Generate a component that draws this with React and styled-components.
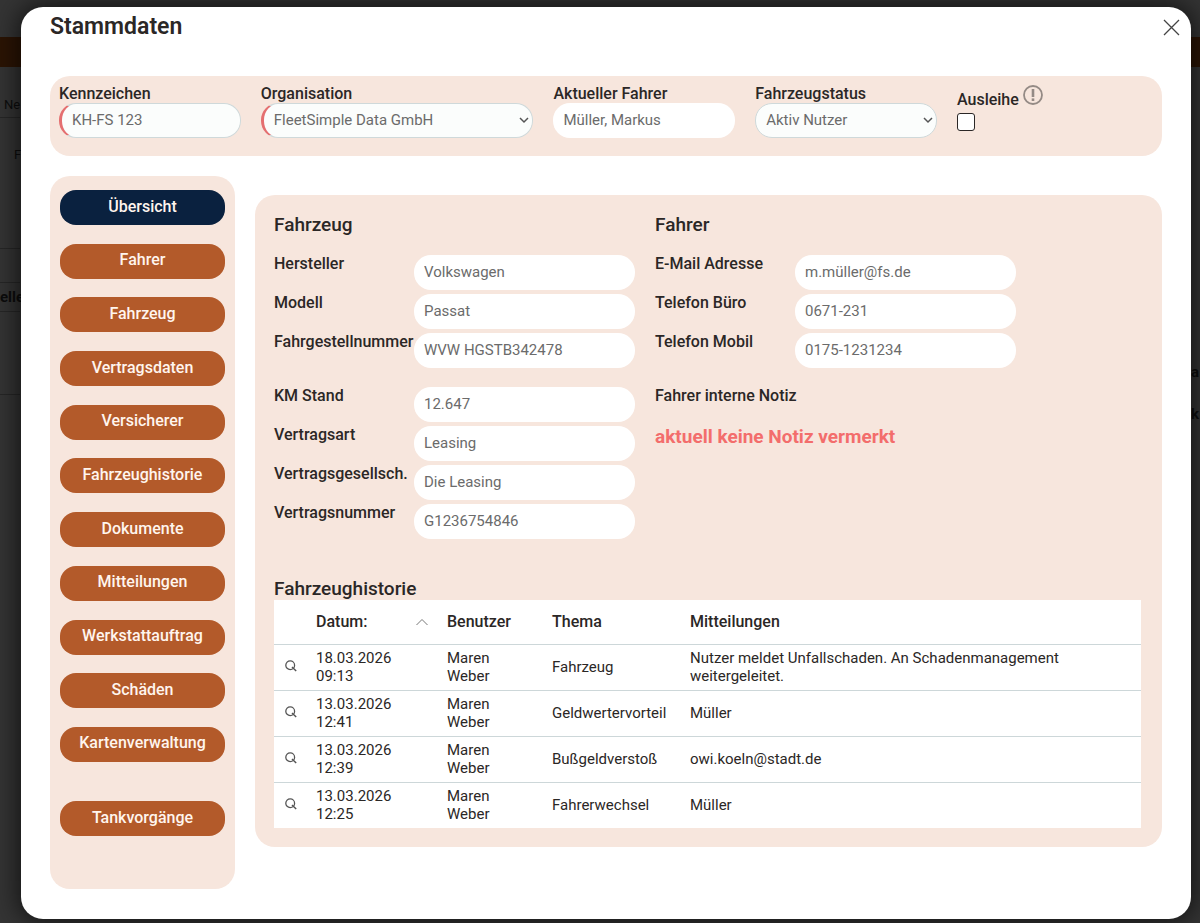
import React from "react";
import styled, { createGlobalStyle } from "styled-components";

const GlobalStyle = createGlobalStyle`
  * {
    box-sizing: border-box;
  }
  body {
    margin: 0;
    background: #2c2c2c;
    color: #2b2726;
    font-family: Roboto, "Liberation Sans", sans-serif;
    font-size: 15px;
    line-height: 18px;
  }
  input, select, button {
    font: inherit;
  }
`;

const Page = styled.div`
  display: grid;
  min-height: 100vh;
  overflow: hidden;
`;

/* dimmed page behind the dialog */
const Backdrop = styled.div`
  grid-area: 1 / 1;
  display: flex;
  flex-direction: column;
  padding-top: 37px;
  background: #343434;
  color: #0c0c0c;
`;
const BackBar = styled.div`
  height: 30px;
  background: #2b1404;
`;
const BackBody = styled.div`
  display: flex;
  justify-content: space-between;
`;
const BackColumn = styled.div`
  width: 20px;
  white-space: nowrap;
  padding-top: ${(p) => p.$top || 0}px;
`;
const BackCell = styled.div`
  height: ${(p) => p.$height}px;
  padding-left: ${(p) => p.$indent || 0}px;
  font-size: ${(p) => (p.$bold ? 15 : 13)}px;
  font-weight: ${(p) => (p.$bold ? 700 : 400)};
  border-bottom: ${(p) => (p.$line ? "1px solid #262626" : "none")};
`;

const Dialog = styled.div`
  grid-area: 1 / 1;
  z-index: 1;
  margin: 7px 9px 4px 21px;
  background: #fff;
  border-radius: 22px;
  box-shadow: 0 0 24px 4px rgba(0, 0, 0, 0.6);
`;
const Header = styled.header`
  display: flex;
  align-items: center;
  justify-content: space-between;
  padding: 7px 9px 0 29px;
`;
const Title = styled.h1`
  margin: 0;
  font-size: 23px;
  line-height: 26px;
  font-weight: 600;
`;
const CloseButton = styled.button`
  display: flex;
  padding: 2px;
  border: none;
  background: none;
  color: #444;
  cursor: pointer;
`;
const Content = styled.div`
  padding: 36px 29px 30px;
`;

const TopPanel = styled.section`
  display: grid;
  grid-template-columns: 2fr 3fr 2fr 2fr 195px;
  gap: 20px;
  padding: 9px 10px 18px 9px;
  background: #f7e6dd;
  border-radius: 20px;
`;
const Label = styled.label`
  display: block;
  font-size: 16px;
  font-weight: 500;
  white-space: nowrap;
`;
const Input = styled.input`
  display: block;
  width: 100%;
  min-width: 0;
  height: 35px;
  padding: 0 10px 2px;
  border: none;
  border-radius: 17px;
  background: ${(p) => (p.$outlined ? "#fbfdfc" : "#fff")};
  color: #6b6b6b;
  ${(p) => p.$outlined && "border: 1px solid #cfd9da;"}
  ${(p) => p.$required && "border-left: 3px solid #e46f70;"}
`;
const SelectWrap = styled.div`
  position: relative;
  svg {
    position: absolute;
    right: 4px;
    top: 12px;
    color: #555;
    pointer-events: none;
  }
`;
const Select = styled(Input)`
  appearance: none;
`;
const LoanLabel = styled(Label)`
  display: flex;
  align-items: flex-end;
  gap: 4px;
  height: 24px;
  svg {
    align-self: flex-start;
    color: #948a85;
  }
`;
const Checkbox = styled.input`
  appearance: none;
  display: block;
  width: 18px;
  height: 18px;
  margin: 4px 0 0;
  border: 1px solid #2b2726;
  border-radius: 3px;
  background: #fff;
  &:checked {
    background: #b35a2a;
  }
`;

const Columns = styled.div`
  display: flex;
  align-items: flex-start;
  gap: 20px;
  padding-top: 20px;
`;
const Sidebar = styled.nav`
  flex: 0 0 185px;
  padding: 14px 10px 53px;
  background: #f7e6dd;
  border-radius: 20px;
`;
const NavList = styled.div`
  display: grid;
  align-content: space-between;
  min-height: 572px;
  margin-bottom: 39px;
`;
const NavButton = styled.button`
  width: 100%;
  height: 35px;
  padding: 0 0 2px;
  border: none;
  border-radius: 16px;
  background: ${(p) => (p.$active ? "#0a213f" : "#b35a2a")};
  color: #fff5ee;
  font-size: 16px;
  font-weight: 500;
  cursor: pointer;
`;

const Main = styled.main`
  flex: 1;
  min-width: 0;
  margin-top: 19px;
  padding: 19px 21px 19px 19px;
  background: #f7e6dd;
  border-radius: 20px;
`;
const SectionTitle = styled.h2`
  margin: 0;
  font-size: 19px;
  line-height: 22px;
  font-weight: 500;
`;
const Details = styled.div`
  display: grid;
  grid-template-columns: 1fr 1fr;
  gap: 20px;
  padding: 0 125px 39px 0;
`;
const FieldGroup = styled.div`
  display: grid;
  gap: 4px;
  margin-top: 19px;
`;
const FieldRow = styled.div`
  display: flex;
  align-items: flex-start;
  ${Label} {
    flex: 0 0 140px;
  }
`;
const NoteTitle = styled.h3`
  margin: 0;
  font-size: 16px;
  line-height: 18px;
  font-weight: 500;
`;
const Note = styled.p`
  margin: 17px 0 0;
  color: #f36d6c;
  font-size: 19px;
  line-height: 22px;
  font-weight: 700;
`;

const Table = styled.table`
  width: 100%;
  table-layout: fixed;
  border-collapse: collapse;
  background: #fff;
`;
const HeadCell = styled.th`
  width: ${(p) => p.$width};
  height: 44px;
  padding: 0;
  font-size: 16px;
  font-weight: 500;
  text-align: left;
`;
const SortHead = styled.div`
  display: flex;
  align-items: center;
  justify-content: space-between;
  padding-right: 19px;
`;
const Cell = styled.td`
  height: 46px;
  padding: 0 ${(p) => p.$right || 0}px 0 0;
  border-top: 1px solid #cdd7d9;
`;
const IconButton = styled.button`
  display: flex;
  padding: 0 11px 2px;
  border: none;
  background: none;
  color: #555;
  cursor: pointer;
`;

const ChevronDown = () => (
  <svg width="10" height="10" viewBox="0 0 10 10" fill="none" stroke="currentColor" strokeWidth="1.5">
    <path d="M1 3l4 4 4-4" />
  </svg>
);
const CloseIcon = () => (
  <svg width="17" height="17" viewBox="0 0 17 17" fill="none" stroke="currentColor" strokeWidth="1.3">
    <path d="M1 1l15 15M16 1L1 16" />
  </svg>
);
const InfoIcon = () => (
  <svg width="20" height="20" viewBox="0 0 20 20" fill="none" stroke="currentColor">
    <circle cx="10" cy="10" r="9" strokeWidth="1.8" />
    <path d="M10 4v8" strokeWidth="2.6" />
    <path d="M10 13.4v2.6" strokeWidth="2.6" />
  </svg>
);
const SortIcon = () => (
  <svg width="12" height="8" viewBox="0 0 12 8" fill="none" stroke="#777" strokeWidth="1">
    <path d="M0.5 7L6 1.5 11.5 7" />
  </svg>
);
const SearchIcon = () => (
  <svg width="12" height="12" viewBox="0 0 12 12" fill="none" stroke="currentColor" strokeWidth="1.3">
    <circle cx="5.2" cy="5.2" r="4.4" />
    <path d="M7 7l4.2 4" strokeWidth="1.5" />
  </svg>
);

const navItems = [
  "Übersicht",
  "Fahrer",
  "Fahrzeug",
  "Vertragsdaten",
  "Versicherer",
  "Fahrzeughistorie",
  "Dokumente",
  "Mitteilungen",
  "Werkstattauftrag",
  "Schäden",
  "Kartenverwaltung",
];

const vehicle = [
  ["hersteller", "Hersteller", "Volkswagen"],
  ["modell", "Modell", "Passat"],
  ["fin", "Fahrgestellnummer", "WVW HGSTB342478"],
];
const contract = [
  ["km", "KM Stand", "12.647"],
  ["vertragsart", "Vertragsart", "Leasing"],
  ["gesellschaft", "Vertragsgesellsch.", "Die Leasing"],
  ["vertragsnummer", "Vertragsnummer", "G1236754846"],
];
const driver = [
  ["email", "E-Mail Adresse", "m.müller@fs.de"],
  ["buero", "Telefon Büro", "0671-231"],
  ["mobil", "Telefon Mobil", "0175-1231234"],
];

const history = [
  ["18.03.2026 09:13", "Maren Weber", "Fahrzeug", "Nutzer meldet Unfallschaden. An Schadenmanagement weitergeleitet."],
  ["13.03.2026 12:41", "Maren Weber", "Geldwertervorteil", "Müller"],
  ["13.03.2026 12:39", "Maren Weber", "Bußgeldverstoß", "owi.koeln@stadt.de"],
  ["13.03.2026 12:25", "Maren Weber", "Fahrerwechsel", "Müller"],
];

const Fields = ({ items }) => (
  <FieldGroup>
    {items.map(([id, label, value]) => (
      <FieldRow key={id}>
        <Label htmlFor={id}>{label}</Label>
        <Input id={id} defaultValue={value} />
      </FieldRow>
    ))}
  </FieldGroup>
);

const App = () => {
  return (
    <Page>
      <GlobalStyle />
      <Backdrop aria-hidden="true">
        <BackBar />
        <BackBody>
          <BackColumn $top={29}>
            <BackCell $height={22} $indent={4} $line>Ne</BackCell>
            <BackCell $height={28} />
            <BackCell $height={103} $indent={14} $line>F</BackCell>
            <BackCell $height={34} $line />
            <BackCell $height={5} />
            <BackCell $height={24} $bold $line>elle</BackCell>
            <BackCell $height={83} $line />
          </BackColumn>
          <BackColumn $top={296}>
            <BackCell $height={42} $indent={11} $bold>a</BackCell>
            <BackCell $height={42} $indent={11} $bold>k</BackCell>
          </BackColumn>
        </BackBody>
      </Backdrop>

      <Dialog role="dialog" aria-label="Stammdaten">
        <Header>
          <Title>Stammdaten</Title>
          <CloseButton aria-label="Schließen">
            <CloseIcon />
          </CloseButton>
        </Header>
        <Content>
          <TopPanel>
            <div>
              <Label htmlFor="kennzeichen">Kennzeichen</Label>
              <Input id="kennzeichen" defaultValue="KH-FS 123" $outlined $required />
            </div>
            <div>
              <Label htmlFor="organisation">Organisation</Label>
              <SelectWrap>
                <Select as="select" id="organisation" $outlined $required>
                  <option>FleetSimple Data GmbH</option>
                </Select>
                <ChevronDown />
              </SelectWrap>
            </div>
            <div>
              <Label htmlFor="fahrer">Aktueller Fahrer</Label>
              <Input id="fahrer" defaultValue="Müller, Markus" />
            </div>
            <div>
              <Label htmlFor="status">Fahrzeugstatus</Label>
              <SelectWrap>
                <Select as="select" id="status" $outlined>
                  <option>Aktiv Nutzer</option>
                </Select>
                <ChevronDown />
              </SelectWrap>
            </div>
            <div>
              <LoanLabel htmlFor="ausleihe">
                Ausleihe <InfoIcon />
              </LoanLabel>
              <Checkbox type="checkbox" id="ausleihe" />
            </div>
          </TopPanel>

          <Columns>
            <Sidebar>
              <NavList>
                {navItems.map((item, i) => (
                  <NavButton key={item} $active={i === 0}>{item}</NavButton>
                ))}
              </NavList>
              <NavButton>Tankvorgänge</NavButton>
            </Sidebar>

            <Main>
              <Details>
                <div>
                  <SectionTitle>Fahrzeug</SectionTitle>
                  <Fields items={vehicle} />
                  <Fields items={contract} />
                </div>
                <div>
                  <SectionTitle>Fahrer</SectionTitle>
                  <Fields items={driver} />
                  <FieldGroup>
                    <NoteTitle>Fahrer interne Notiz</NoteTitle>
                    <Note>aktuell keine Notiz vermerkt</Note>
                  </FieldGroup>
                </div>
              </Details>

              <SectionTitle>Fahrzeughistorie</SectionTitle>
              <Table>
                <thead>
                  <tr>
                    <HeadCell $width="42px" aria-label="Details" />
                    <HeadCell $width="131px">
                      <SortHead>
                        Datum: <SortIcon />
                      </SortHead>
                    </HeadCell>
                    <HeadCell $width="105px">Benutzer</HeadCell>
                    <HeadCell $width="138px">Thema</HeadCell>
                    <HeadCell $width="auto">Mitteilungen</HeadCell>
                  </tr>
                </thead>
                <tbody>
                  {history.map(([date, user, topic, message]) => (
                    <tr key={date}>
                      <Cell>
                        <IconButton aria-label="Details anzeigen">
                          <SearchIcon />
                        </IconButton>
                      </Cell>
                      <Cell $right={50}>{date}</Cell>
                      <Cell $right={50}>{user}</Cell>
                      <Cell>{topic}</Cell>
                      <Cell $right={50}>{message}</Cell>
                    </tr>
                  ))}
                </tbody>
              </Table>
            </Main>
          </Columns>
        </Content>
      </Dialog>
    </Page>
  );
};

export default App;
